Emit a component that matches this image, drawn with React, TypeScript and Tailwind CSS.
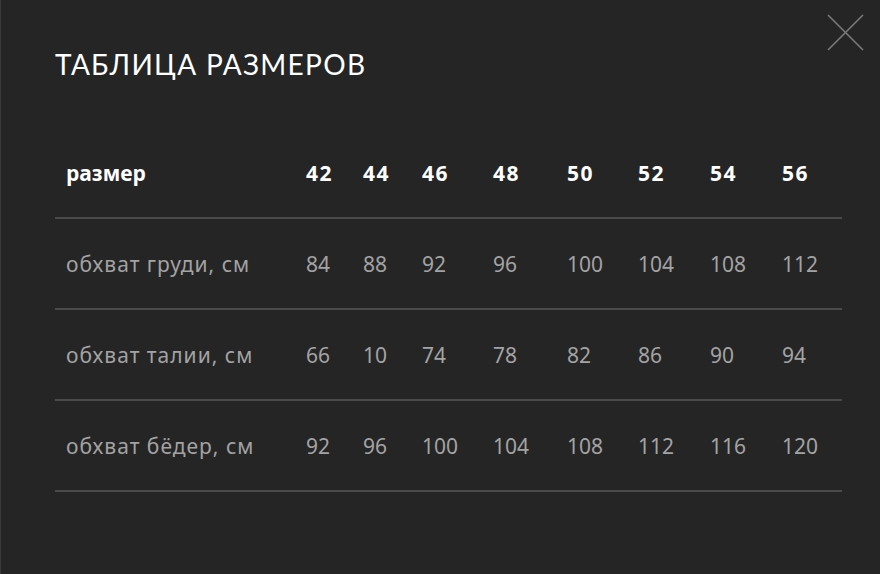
import React from "react";

const sizes = ["42", "44", "46", "48", "50", "52", "54", "56"];
const rows: { label: string; values: string[] }[] = [
  { label: "обхват груди, см", values: ["84", "88", "92", "96", "100", "104", "108", "112"] },
  { label: "обхват талии, см", values: ["66", "10", "74", "78", "82", "86", "90", "94"] },
  { label: "обхват бёдер, см", values: ["92", "96", "100", "104", "108", "112", "116", "120"] },
];

const rowCls =
  "grid grid-cols-[251px_57px_59px_71px_74px_71px_72px_72px_1fr] h-[91px] items-center border-b-2 border-[#4a4a4a] leading-[24px]";

export default function App() {
  return (
    <div
      className="relative w-[880px] h-[574px] bg-[#252525] border-l border-[#3a3a3a] overflow-hidden"
      style={{ fontFamily: '"Noto Sans", "DejaVu Sans", sans-serif' }}
    >
      <button className="absolute left-[826px] top-[14px] w-[37px] h-[37px]" aria-label="close">
        <svg width="37" height="37" viewBox="0 0 37 37">
          <path d="M1 1 L36 36 M36 1 L1 36" stroke="#7a7a7a" strokeWidth="1.6" />
        </svg>
      </button>
      <div className="pl-[54px] pr-[38px]">
        <h1
          className="pt-[49px] text-[28px] leading-[30px] text-white tracking-[1.3px]"
          style={{ fontFamily: 'Lato, "Open Sans", sans-serif' }}
        >
          ТАБЛИЦА РАЗМЕРОВ
        </h1>
        <div className="mt-[49px]">
          <div className={rowCls + " text-white font-bold text-[21px]"}>
            <div className="pl-[11px]">размер</div>
            {sizes.map((s) => (
              <div key={s} className="tracking-[1.5px]">{s}</div>
            ))}
          </div>
          {rows.map((r) => (
            <div key={r.label} className={rowCls + " text-[#a3a3a3] text-[21px]"}>
              <div className="pl-[11px] tracking-[1px]">{r.label}</div>
              {r.values.map((v, i) => (
                <div key={i}>{v}</div>
              ))}
            </div>
          ))}
        </div>
      </div>
    </div>
  );
}
